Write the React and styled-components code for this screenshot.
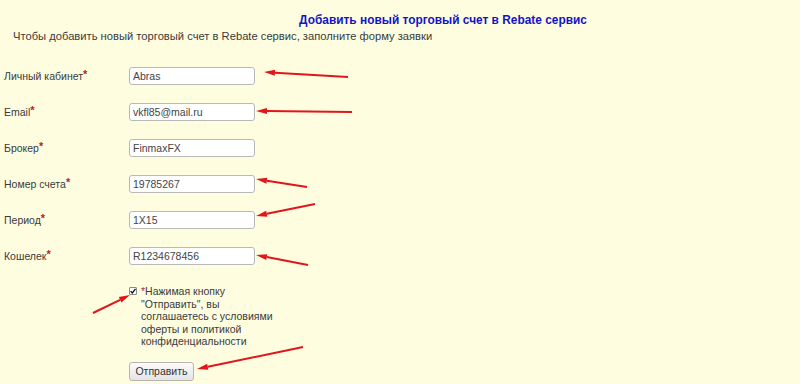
import styled, { createGlobalStyle } from "styled-components";

const GlobalStyle = createGlobalStyle`
  html, body {
    margin: 0;
    padding: 0;
    background: #fffde0;
  }
  body {
    font-family: "Liberation Sans", Arial, sans-serif;
    color: #3a3a3a;
  }
`;

const Page = styled.div`
  position: relative;
  width: 800px;
  height: 384px;
  overflow: hidden;
  background: #fffde0;
  padding-top: 12px;
  box-sizing: border-box;
`;

const Title = styled.h1`
  margin: 0;
  padding-left: 86px;
  font-size: 11.9px;
  line-height: 17px;
  font-weight: bold;
  color: #1313c8;
  text-align: center;
`;

const Subtitle = styled.p`
  margin: 0;
  padding-left: 13px;
  font-size: 11.2px;
  line-height: 14px;
  color: #3a3a3a;
`;

const Form = styled.form`
  display: grid;
  grid-template-columns: 125px 126px;
  row-gap: 18px;
  padding: 24px 0 0 4px;
`;

const Label = styled.label`
  display: flex;
  align-items: center;
  font-size: 10.5px;
  color: #3a3a3a;
`;

const Star = styled.span`
  color: #b22222;
  font-weight: bold;
  font-size: 11px;
  align-self: flex-start;
  line-height: 1;
  margin-top: 2px;
`;

const InlineStar = styled.span`
  color: #c0282b;
`;

const Input = styled.input`
  box-sizing: border-box;
  width: 126px;
  height: 18px;
  padding: 0 3px;
  border: 1px solid #b8b8b8;
  border-radius: 3px;
  background: #fff;
  font-family: "Liberation Sans", Arial, sans-serif;
  font-size: 10.5px;
  color: #444;
  outline: none;
`;

const AgreeRow = styled.div`
  grid-column: 2;
  display: flex;
  gap: 4px;
  margin-top: 2px;
`;

const Box = styled.span`
  flex: none;
  box-sizing: border-box;
  width: 8px;
  height: 8px;
  margin-top: 2px;
  border: 1px solid #8a8a8a;
  border-radius: 1px;
  background: #fdfdfd;
  display: flex;
  align-items: center;
  justify-content: center;
`;

const AgreeText = styled.div`
  flex: none;
  width: 132px;
  font-size: 10.5px;
  line-height: 12.5px;
  color: #3a3a3a;
`;

const Submit = styled.button`
  grid-column: 2;
  justify-self: start;
  margin-top: -4px;
  width: 65px;
  height: 19px;
  padding: 0;
  border: 1px solid #b5b5b5;
  border-radius: 3px;
  background: linear-gradient(#fbfbfb, #e4e4e4);
  font-family: "Liberation Sans", Arial, sans-serif;
  font-size: 10.5px;
  color: #333;
`;

const Overlay = styled.svg`
  position: absolute;
  left: 0;
  top: 0;
  pointer-events: none;
`;

const fields = [
  ["Личный кабинет", "Abras"],
  ["Email", "vkfl85@mail.ru"],
  ["Брокер", "FinmaxFX"],
  ["Номер счета", "19785267"],
  ["Период", "1X15"],
  ["Кошелек", "R1234678456"]
];

const arrows = [
  [348, 77, 264, 72],
  [352, 112, 256, 111],
  [307, 187, 256, 179],
  [315, 204, 256, 216],
  [308, 265, 256, 255],
  [93, 313, 130, 295],
  [303, 347, 197, 369]
];

const Arrow = ({ x1, y1, x2, y2 }) => {
  const dx = x2 - x1;
  const dy = y2 - y1;
  const len = Math.hypot(dx, dy);
  const ux = dx / len;
  const uy = dy / len;
  const bx = x2 - ux * 11;
  const by = y2 - uy * 11;
  const px = -uy * 3;
  const py = ux * 3;
  return (
    <g>
      <line x1={x1} y1={y1} x2={bx} y2={by} stroke="#e0161b" strokeWidth="2" />
      <polygon
        points={`${x2},${y2} ${bx + px},${by + py} ${bx - px},${by - py}`}
        fill="#e0161b"
      />
    </g>
  );
};

const App = () => {
  return (
    <>
      <GlobalStyle />
      <Page>
        <Title>Добавить новый торговый счет в Rebate сервис</Title>
        <Subtitle>
          Чтобы добавить новый торговый счет в Rebate сервис, заполните форму заявки
        </Subtitle>
        <Form onSubmit={e => e.preventDefault()}>
          {fields.map(([label, value]) => [
            <Label key={label + "l"}>
              {label}
              <Star>*</Star>
            </Label>,
            <Input key={label + "i"} defaultValue={value} />
          ])}
          <AgreeRow>
            <Box>
              <svg width="6" height="6" viewBox="0 0 6 6">
                <path d="M0.6 3.1 L2.3 5 L5.5 0.8" stroke="#111" strokeWidth="1.3" fill="none" />
              </svg>
            </Box>
            <AgreeText>
              <InlineStar>*</InlineStar>Нажимая кнопку "Отправить", вы соглашаетесь с условиями
              оферты и политикой конфиденциальности
            </AgreeText>
          </AgreeRow>
          <Submit type="submit">Отправить</Submit>
        </Form>
        <Overlay width="800" height="384">
          {arrows.map(([x1, y1, x2, y2], i) => (
            <Arrow key={i} x1={x1} y1={y1} x2={x2} y2={y2} />
          ))}
        </Overlay>
      </Page>
    </>
  );
};

export default App;
